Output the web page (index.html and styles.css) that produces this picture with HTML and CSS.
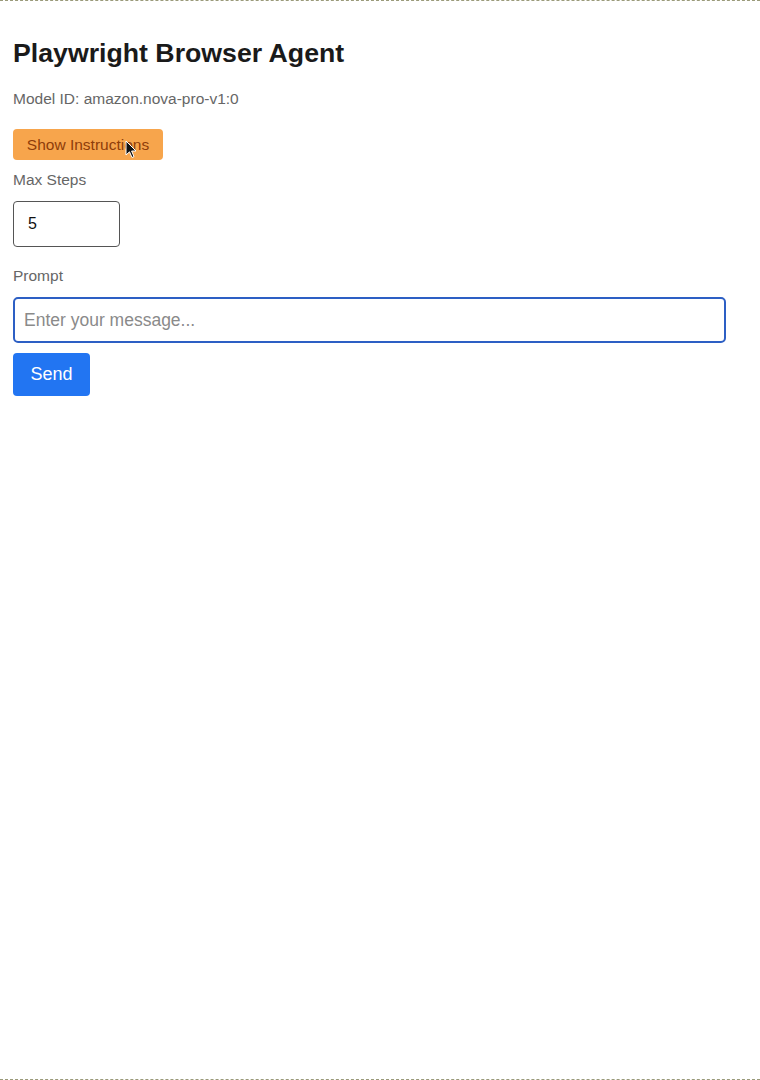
FILE: index.html
```html
<!DOCTYPE html>
<html lang="en">
<head>
  <meta charset="UTF-8" />
  <meta name="viewport" content="width=device-width, initial-scale=1.0"/>
  <title>Playwright Browser Agent</title>
  <link rel="stylesheet" href="styles.css">
</head>
<body>
  <div class="container">
    <h2>Playwright Browser Agent</h2>
    <p class="model">Model ID: amazon.nova-pro-v1:0</p>

    <div class="toggle-wrap">
      <button class="toggle">Show Instructions</button>
      <svg class="cursor" width="12" height="19" viewBox="0 0 12 19">
        <path d="M1 1 L1 15 L4.5 11.8 L7 17.5 L9 16.6 L6.6 11 L11 11 Z" fill="#111" stroke="#fff" stroke-width="1"/>
      </svg>
    </div>

    <label for="steps">Max Steps</label>
    <input type="number" id="steps" class="steps" min="1" max="50" value="5" />

    <label for="prompt" class="prompt-label">Prompt</label>
    <input type="text" id="prompt" class="prompt" placeholder="Enter your message..." />

    <button class="send">Send</button>
  </div>
</body>
</html>
```

FILE: styles.css
```css
html {
  border-top: 1px dashed #9a9a7a;
  border-bottom: 1px dashed #9a9a7a;
  min-height: 1078px;
}

body {
  font-family: "Liberation Sans", Arial, sans-serif;
  background: #fff;
  margin: 0;
  padding: 0 13px;
  color: #222;
}

.container {
  display: flex;
  flex-direction: column;
  align-items: flex-start;
}

h2 {
  font-size: 26.7px;
  margin: 37px 0 0;
  color: #1a1a1a;
}

.model {
  font-size: 15.5px;
  color: #666;
  margin: 21px 0 0;
}

.toggle-wrap {
  position: relative;
  margin-top: 21px;
}

.toggle {
  background: #f7a54c;
  color: #8e3d0a;
  border: none;
  border-radius: 4px;
  font-family: inherit;
  font-size: 15.5px;
  width: 150px;
  height: 31px;
  padding: 0;
  cursor: pointer;
}

.cursor {
  position: absolute;
  left: 112px;
  top: 11px;
}

label {
  font-size: 15.5px;
  color: #666;
  margin-top: 11px;
}

.steps {
  margin-top: 12px;
  width: 107px;
  height: 46px;
  box-sizing: border-box;
  border: 1px solid #555;
  border-radius: 4px;
  padding: 0 14px;
  font-family: inherit;
  font-size: 16px;
  color: #111;
  -moz-appearance: textfield;
}

.steps::-webkit-inner-spin-button,
.steps::-webkit-outer-spin-button {
  -webkit-appearance: none;
  margin: 0;
}

.prompt-label {
  margin-top: 20px;
}

.prompt {
  margin-top: 12px;
  width: 713px;
  height: 46px;
  box-sizing: border-box;
  border: 2px solid #2d5fc4;
  border-radius: 5px;
  padding: 0 9px;
  font-family: inherit;
  font-size: 17.5px;
  outline: none;
}

.prompt::placeholder {
  color: #8a8a8a;
}

.send {
  margin-top: 10px;
  width: 77px;
  height: 43px;
  background: #2275f2;
  color: #fff;
  border: none;
  border-radius: 4px;
  font-family: inherit;
  font-size: 18px;
  cursor: pointer;
}
```
